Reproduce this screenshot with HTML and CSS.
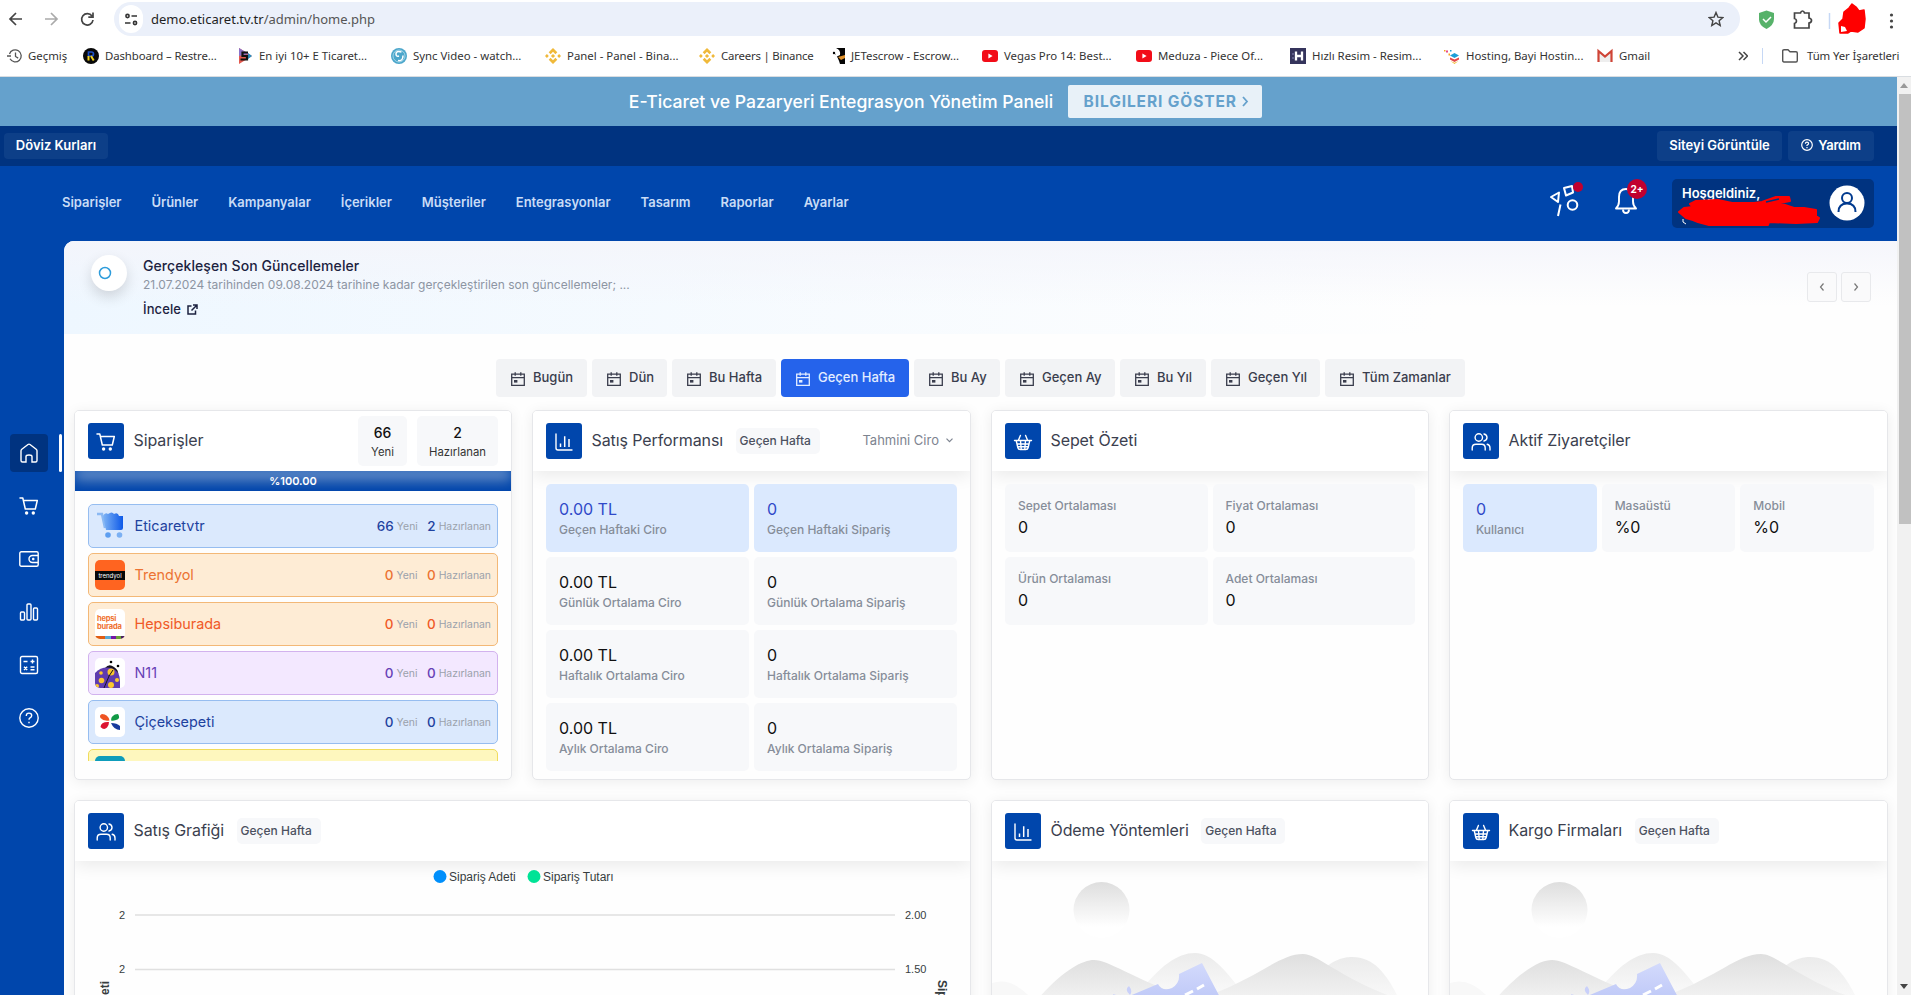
FILE: index.html
```html
<!DOCTYPE html>
<html lang="tr">
<head>
<meta charset="utf-8">
<title>Yönetim Paneli</title>
<link rel="stylesheet" href="styles.css">
</head>
<body>
<svg class="defs" aria-hidden="true">
  <symbol id="i-cal" viewBox="0 0 14 14"><path d="M.7 2.2h12.6v11.1H.7zM.7 5.6h12.6M4.2.2v3.6M9.8.2v3.6" fill="none" stroke="currentColor" stroke-width="1.3"/><path d="M3 8h3.4v2.6H3z" fill="currentColor"/></symbol>
  <symbol id="i-cart" viewBox="0 0 20 20"><path d="M1 2h2.8l2.5 11h10l2-8.500H4.500" fill="none" stroke="currentColor" stroke-width="1.500" stroke-linejoin="round" stroke-linecap="round"/><circle cx="7.600" cy="17" r="1.700" fill="currentColor"/><circle cx="14.300" cy="17" r="1.700" fill="currentColor"/></symbol>
  <symbol id="i-bars" viewBox="0 0 20 20"><path d="M2 2v14q0 2 2 2h14" fill="none" stroke="currentColor" stroke-width="1.400" stroke-linecap="round"/><path d="M6.500 15v-3.500M10.700 15V4.200M15 15V7" fill="none" stroke="currentColor" stroke-width="1.500"/></symbol>
  <symbol id="i-basket" viewBox="0 0 20 20"><path d="M1.500 8.500h17M3.200 8.500l1.600 7q.4 2 2.400 2h5.600q2 0 2.400-2l1.600-7M4 12h12M7.500 8.500l.7 8.500M12.500 8.500l-.7 8.500M5.500 8l1.900-4.500M14.500 8l-1.900-4.500M5 14.700h10" fill="none" stroke="currentColor" stroke-width="1.400" stroke-linecap="round"/></symbol>
  <symbol id="i-users" viewBox="0 0 20 20"><circle cx="7.800" cy="5.500" r="3.700" fill="none" stroke="currentColor" stroke-width="1.400"/><path d="M1.200 18v-2q0-3.700 3.800-3.700h5.600q3.600 0 3.600 3.700v2M13 2q3 .8 3 3.600T13 9M16.200 12.300q2.800.7 2.800 3.700v2" fill="none" stroke="currentColor" stroke-width="1.400" stroke-linecap="round"/></symbol>
  <symbol id="i-diamond" viewBox="0 0 16 16"><path d="M8 0l4.300 4.300-1.900 1.900L8 3.800 5.600 6.200 3.700 4.300zM8 16l4.300-4.300-1.900-1.900L8 12.200 5.600 9.800l-1.900 1.900zM8 5.900L10.100 8 8 10.100 5.900 8zM1.900 6.100L3.800 8 1.900 9.900 0 8zM14.100 6.100L16 8l-1.900 1.900L12.200 8z" fill="#f0b93a"/></symbol>
  <symbol id="i-yt" viewBox="0 0 16 12"><rect width="16" height="12" rx="3" fill="#f20d18"/><path d="M6.400 3.500v5L10.600 6z" fill="#fff"/></symbol>
  <symbol id="i-empty" viewBox="0 0 436 140">
    <circle cx="109.500" cy="49" r="28" fill="url(#g-sun)"/>
    <path d="M0 122q18-6 36 12v6H0z" fill="#f8f8f8"/>
    <path d="M145 134C168 105 185 92 203 92s32 20 50 42z" fill="url(#g-hill2)"/>
    <path d="M320 120C338 98 352 96 360 96c24 0 36 20 48 44h-88z" fill="url(#g-hill2)"/>
    <path d="M44 140C70 110 90 99 102 99c16 0 45 23 105 41z" fill="url(#g-hill)"/>
    <path d="M200 140C265 120 285 93 311 93c16 0 35 24 100 47z" fill="url(#g-hill)"/>
    <path d="M138 140l-3-4 31-13q4 8 14 4 8-5 7-14l23-11 20 38z" fill="url(#g-ticket)"/>
    <path d="M193 134l8-4M205 128l7-4" stroke="#fff" stroke-width="3"/>
    <path d="M137 125q-5 4 1 9 3-4-1-9M121 133l9 3 2 4h-8z" fill="#c9d0fa"/>
  </symbol>
  <linearGradient id="g-sun" x2="0" y2="1"><stop stop-color="#dedede"/><stop offset=".8" stop-color="#fff"/></linearGradient>
  <linearGradient id="g-hill" x2="0" y2="1"><stop stop-color="#dfdfdf"/><stop offset="1" stop-color="#f3f3f3"/></linearGradient>
  <linearGradient id="g-hill2" x2="0" y2="1"><stop stop-color="#ebebeb"/><stop offset="1" stop-color="#fafafa"/></linearGradient>
  <linearGradient id="g-ticket" x2="0" y2="1"><stop stop-color="#d3dafc"/><stop offset="1" stop-color="#bec8f7"/></linearGradient>
  <linearGradient id="g-cart"><stop stop-color="#7fb4f5"/><stop offset="1" stop-color="#0d59e8"/></linearGradient>
</svg>

<header class="chrome">
  <div class="toolbar">
    <svg class="tb-nav" viewBox="0 0 96 20"><g fill="none" stroke-width="1.700"><path d="M14 10H2M8 4l-6 6 6 6" stroke="#444"/><path d="M37 10h12M43 4l6 6-6 6" stroke="#aaa"/><path d="M84 7A5.700 5.700 0 1 0 85 11M85 3.500v4.700h-4.700" stroke="#444"/></g></svg>
    <div class="omnibox">
      <span class="site-info"><svg width="13" height="13" viewBox="0 0 13 13" fill="none" stroke="#333" stroke-width="1.600"><circle cx="2.500" cy="3" r="1.600"/><path d="M6.500 3H12M0 10h5.500"/><circle cx="10" cy="10" r="1.600"/></svg></span>
      <span class="url"><b>demo.eticaret.tv.tr</b>/admin/home.php</span>
      <svg class="star" viewBox="0 0 16 16"><path d="M8 1.500l1.900 4.600 4.900.4-3.700 3.200 1.100 4.800L8 11.900l-4.200 2.600 1.100-4.800L1.200 6.500l4.900-.4z" fill="none" stroke="#444" stroke-width="1.400"/></svg>
    </div>
    <svg class="tb-ext" viewBox="0 0 160 34"><path d="M8 11l7.500-2.500 7.500 2.500v6q0 6-7.500 10Q8 23.500 8 17.500z" fill="#57b26a"/><path d="M12 17l3 3 5-5" fill="none" stroke="#fff" stroke-width="1.500"/><path d="M44 11h5.500q.5-2 2-2t2 2H58v5q2.500.5 2.500 2.500T58 21v5H43.500v-4.500q2-.5 2-2.500t-2-2.500V11z" fill="none" stroke="#444" stroke-width="1.700"/><path d="M78.500 11v16" stroke="#c6d8f5" stroke-width="1.500"/><path d="M89 31l-1-10 4-4 1-7 5-4 3-4 4 3 3 4 5-1 1 9-1 9-6 4-7-1-3 2z" fill="#f00" stroke="#f00" stroke-width="1.500" stroke-linejoin="round"/><path d="M90 24l4 1 2 4-6 1z" fill="#fff"/><g fill="#444"><circle cx="140.500" cy="13" r="1.600"/><circle cx="140.500" cy="19" r="1.600"/><circle cx="140.500" cy="25" r="1.600"/></g></svg>
  </div>
  <nav class="bookmarks">
    <a class="bm bm-1"><svg viewBox="0 0 16 16" fill="none" stroke="#555" stroke-width="1.300"><path d="M2.500 6A6 6 0 1 1 3 10.800M0 8h4M8.500 4.500V8.500l2.700 1.600"/></svg>Geçmiş</a>
    <a class="bm bm-2"><svg viewBox="0 0 16 16"><circle cx="8" cy="8" r="8" fill="#080808"/><path d="M5.500 8V4h3q2 0 2 2t-2 2z" stroke="#1d4fc2" stroke-width="1.700" fill="none"/><path d="M5.500 8v4.500M8 8l2.700 4.500" stroke="#f2d21c" stroke-width="2"/></svg>Dashboard – Restre...</a>
    <a class="bm bm-3"><svg viewBox="0 0 16 16"><path d="M2 0l13 8L2 16z" fill="#e35a4f"/><path d="M2 0l10 6L2 8z" fill="#8a72c9"/><path d="M11 5l4 3-4 3z" fill="#2a8ec0"/><path d="M11 4.500H5.500V8H10v3.500H3.500" fill="none" stroke="#111" stroke-width="2.200"/></svg>En iyi 10+ E Ticaret...</a>
    <a class="bm bm-4"><svg viewBox="0 0 16 16"><circle cx="8" cy="8" r="8" fill="#4ba6cb"/><path d="M10.500 4Q5 2.500 5 6q0 3 3 2M7 12.500q5 1 5-5" fill="none" stroke="#fff" stroke-width="1.500"/><circle cx="8" cy="8" r="6" fill="none" stroke="#b8dfed" stroke-width=".8"/></svg>Sync Video - watch...</a>
    <a class="bm bm-5"><svg><use href="#i-diamond"/></svg>Panel - Panel - Bina...</a>
    <a class="bm bm-6"><svg><use href="#i-diamond"/></svg>Careers | Binance</a>
    <a class="bm bm-7"><svg viewBox="0 0 16 16"><path d="M3 0h13v16h-5Q9 9 6 6z" fill="#050505"/><path d="M0 0h7q5 2 4 7l-4 2Q7 3 0 2z" fill="#fff"/><circle cx="5" cy="5" r="1.200"/><path d="M9 9l7-2v3l-4 2z" fill="#e0912a"/></svg>JETescrow - Escrow...</a>
    <a class="bm bm-8"><svg><use href="#i-yt"/></svg>Vegas Pro 14: Best...</a>
    <a class="bm bm-9"><svg><use href="#i-yt"/></svg>Meduza - Piece Of...</a>
    <a class="bm bm-10"><svg viewBox="0 0 16 16"><path d="M0 0h16v16H0z" fill="#35345c"/><path d="M6 3.500v9M12 3.500v9M6 8h6" stroke="#fff" stroke-width="2.300"/><path d="M2 6h2M2 10h2" stroke="#8886b5"/></svg>Hızlı Resim - Resim...</a>
    <a class="bm bm-11"><svg viewBox="0 0 16 16"><path d="M6 7.500l4.500-2.500L15 7.500 10.500 10z" fill="#1b9fd8"/><path d="M6 9.500l4.500 2 4.500-2v2l-4.500 2.500L6 11.500z" fill="#e34848"/><path d="M6.500 13l4 1.800 4-1.800-4 3z" fill="#f0b92b"/><path d="M2 2.500h2v2H2z" fill="#e8488a"/><path d="M4.500 5.500h1.500v2H4.500z" fill="#f5a623"/><path d="M6 2h1.500v1.500H6z" fill="#1b9fd8"/><path d="M0 2h1.500v1.500H0z" fill="#f5a623"/></svg>Hosting, Bayi Hostin...</a>
    <a class="bm bm-12"><svg viewBox="0 0 16 12"><path d="M1.500 12V1L8 6.500 14.500 1v11" fill="#eee" stroke="#cf4436" stroke-width="2.200"/></svg>Gmail</a>
    <span class="more"><svg viewBox="0 0 10 10" width="10" height="10" fill="none" stroke="#444" stroke-width="1.500"><path d="M1 1l4 4-4 4M5.500 1l4 4-4 4"/></svg></span>
    <a class="bm all"><svg viewBox="0 0 16 14" fill="none" stroke="#555" stroke-width="1.400"><path d="M.7 2Q.7.800 2 .8h4l2 2h6q1.300 0 1.300 1.200v7.500q0 1.500-1.300 1.500H2Q.7 13 .7 11.500z"/></svg>Tüm Yer İşaretleri</a>
  </nav>
</header>

<div class="viewport">
  <div class="page">
    <div class="promo"><span>E-Ticaret ve Pazaryeri Entegrasyon Yönetim Paneli</span><a class="promo-btn">BILGILERI GÖSTER<svg width="7" height="11" viewBox="0 0 7 11" fill="none" stroke="currentColor" stroke-width="1.800"><path d="M1 1l4 4.500L1 10"/></svg></a></div>
    <div class="topbar">
      <a class="tbtn rates">Döviz Kurları</a>
      <a class="tbtn site">Siteyi Görüntüle</a>
      <a class="tbtn help"><svg width="12" height="12" viewBox="0 0 12 12" fill="none" stroke="#fff" stroke-width="1.200"><circle cx="6" cy="6" r="5.300"/><path d="M4.400 4.800q0-1.700 1.600-1.700t1.600 1.500Q7.600 5.500 6 6.300v.8M6 8v1.200"/></svg>Yardım</a>
    </div>
    <div class="mainnav">
      <nav class="menu"><a>Siparişler</a><a>Ürünler</a><a>Kampanyalar</a><a>İçerikler</a><a>Müşteriler</a><a>Entegrasyonlar</a><a>Tasarım</a><a>Raporlar</a><a>Ayarlar</a></nav>
      <svg class="shapes" viewBox="0 0 36 38" fill="none" stroke="#fff" stroke-width="2" stroke-linejoin="round"><path d="M2 17l8-4.500-1 9.500zM15 8l8-2 1 6.500-7 3zM11.500 24.500L9 36"/><circle cx="23.500" cy="25" r="4.800"/><circle cx="29" cy="7" r="5" fill="#c1002f" stroke="none"/></svg>
      <div class="bell"><svg viewBox="0 0 22 27" fill="none" stroke="#fff" stroke-width="1.900" stroke-linejoin="round"><path d="M1 21.500q3-3 3-7V10q0-8 7-8t7 8v4.500q0 4 3 7z"/><path d="M8 22.500q0 3.500 3 3.500t3-3.500"/></svg><b>2+</b></div>
      <div class="user">
        <span>Hoşgeldiniz,</span>
        <svg class="scribble" viewBox="0 0 142 34"><path d="M1 18L6 14 15 13 12 10 18 7 40 6 54 9 76 9 84 8 98 3 111 3 112 7 101 9 116 14 126 14 138 16 138 22 141 24 139 28 118 29 91 28 90 31 31 31 20 28 15 26 8 24z" fill="#f00" stroke="#f00" stroke-width="2" stroke-linejoin="round"/><path d="M88 8l13-3" stroke="#003380" stroke-width="1.500"/><path d="M5 25v3l3 2" fill="none" stroke="#fff"/></svg>
        <svg class="avatar" viewBox="0 0 36 36"><circle cx="18" cy="18" r="17.500" fill="#fff"/><g fill="none" stroke="#013a8f" stroke-width="2"><circle cx="18" cy="13" r="5"/><path d="M9.500 27q0-8.500 8.500-8.500t8.500 8.500"/></g></svg>
      </div>
    </div>
    <div class="body">
      <aside class="side">
        <a class="s-item active"><svg viewBox="0 0 20 20"><path d="M2 7.800q0-1 .8-1.600L9 1.500q1-.7 2 0l6.200 4.700q.8.600.8 1.600v9.700q0 1.500-1.500 1.500h-3.500v-5.500q0-1.500-3-1.500t-3 1.500V19H3.500Q2 19 2 17.500z"/></svg></a>
        <a class="s-item"><svg><use href="#i-cart"/></svg></a>
        <a class="s-item"><svg viewBox="0 0 20 20"><rect x=".8" y="2.800" width="18.400" height="14.400" rx="1.500"/><path d="M19 6.500h-5.500a3.500 3.500 0 0 0 0 7H19M13 10h2.500M14.200 8.800v2.400"/></svg></a>
        <a class="s-item"><svg viewBox="0 0 20 20"><rect x="1.500" y="10" width="4" height="8" rx="1"/><rect x="8" y="2" width="4" height="16" rx="1"/><rect x="14.500" y="6" width="4" height="12" rx="1"/></svg></a>
        <a class="s-item"><svg viewBox="0 0 20 20"><rect x="1.500" y="1.500" width="17" height="17" rx="1.500"/><path d="M4.500 6.500h4M11.500 6.500h4M13.500 4.500v4M11.500 12h4M11.500 14.800h4M5 11.700l3.200 3.200M8.200 11.700L5 14.900"/></svg></a>
        <a class="s-item"><svg viewBox="0 0 20 20"><circle cx="10" cy="10" r="9.200"/><path d="M7.300 8q0-2.900 2.700-2.900T12.700 7.600Q12.700 9 11 9.900q-1 .6-1 1.900M10 13.700v1.500"/></svg></a>
      </aside>
      <main class="content">
        <section class="news">
          <span class="news-ico"><svg viewBox="0 0 36 36"><circle cx="14" cy="18" r="5.500" fill="none" stroke="#2d9cdb" stroke-width="1.500"/></svg></span>
          <div class="news-text"><h2>Gerçekleşen Son Güncellemeler</h2><p>21.07.2024 tarihinden 09.08.2024 tarihine kadar gerçekleştirilen son güncellemeler; ...</p><a>İncele<svg width="11" height="11" viewBox="0 0 11 11" fill="none" stroke="#1c2240" stroke-width="1.500"><path d="M4.500 2H1v8h7.500V6.500M6 1h4v4M10 1L4.500 6.500"/></svg></a></div>
          <div class="pager"><a><svg viewBox="0 0 8 10"><path d="M5.500 1.500L2.500 5l3 3.500"/></svg></a><a><svg viewBox="0 0 8 10"><path d="M2.500 1.500l3 3.500-3 3.500"/></svg></a></div>
        </section>
        <div class="periods">
          <a class="p1"><svg><use href="#i-cal"/></svg><span>Bugün</span></a><a class="p2"><svg><use href="#i-cal"/></svg><span>Dün</span></a><a class="p3"><svg><use href="#i-cal"/></svg><span>Bu Hafta</span></a><a class="p4 on"><svg><use href="#i-cal"/></svg><span>Geçen Hafta</span></a><a class="p5"><svg><use href="#i-cal"/></svg><span>Bu Ay</span></a><a class="p6"><svg><use href="#i-cal"/></svg><span>Geçen Ay</span></a><a class="p7"><svg><use href="#i-cal"/></svg><span>Bu Yıl</span></a><a class="p8"><svg><use href="#i-cal"/></svg><span>Geçen Yıl</span></a><a class="p9"><svg><use href="#i-cal"/></svg><span>Tüm Zamanlar</span></a>
        </div>
        <div class="grid">
          <section class="card orders">
            <div class="head"><span class="ico"><svg><use href="#i-cart"/></svg></span><h3>Siparişler</h3><div class="count c1"><b>66</b>Yeni</div><div class="count c2"><b>2</b>Hazırlanan</div></div>
            <div class="progress">%100.00</div>
            <div class="shops">
              <div class="shop blue"><svg class="logo" viewBox="0 0 30 30"><path d="M2 3h5l3 14" fill="none" stroke="#8bb9f3" stroke-width="2.500"/><path d="M8 5q2-4 5-2 4-3 6 0 4-2 5 2h4v12q0 2-2 2H11z" fill="url(#g-cart)"/><circle cx="13" cy="24" r="2.800" fill="#5d9ef0"/><circle cx="24.500" cy="24" r="2.800" fill="#7bb0f3"/></svg><h4>Eticaretvtr</h4><b>66</b><i>Yeni</i><b>2</b><i>Hazırlanan</i></div>
              <div class="shop orange"><span class="logo trendyol"><em>trendyol</em></span><h4>Trendyol</h4><b>0</b><i>Yeni</i><b>0</b><i>Hazırlanan</i></div>
              <div class="shop orange deep"><span class="logo hepsi"><em>hepsi<br>burada</em></span><h4>Hepsiburada</h4><b>0</b><i>Yeni</i><b>0</b><i>Hazırlanan</i></div>
              <div class="shop purple"><svg class="logo white" viewBox="0 0 30 30"><path d="M10 10q4-5 9-1 5 3 4 8z" fill="#17131f"/><path d="M0 15Q7 8 16 10t9 14v6H0z" fill="#5f3bb0"/><path d="M17 11L9 30" stroke="#17131f"/><g fill="#fbc72e"><circle cx="16" cy="14" r="3.500"/><circle cx="6.500" cy="22.500" r="2.800"/><circle cx="16" cy="27" r="3"/><circle cx="22" cy="22" r="2"/><circle cx="6" cy="15" r="1.800"/><circle cx="2" cy="28" r="2"/></g><circle cx="16" cy="4" r="1.300"/><circle cx="23" cy="8" r="1.300"/><path d="M18 12l-4 6" stroke="#17131f"/></svg><h4>N11</h4><b>0</b><i>Yeni</i><b>0</b><i>Hazırlanan</i></div>
              <div class="shop blue"><svg class="logo white" viewBox="0 0 30 30"><path d="M14.500 13.500Q13 7 7 7q-3 1-1.500 4 3 3.500 9 2.500z" fill="#ef5423"/><path d="M16 13.500q0-6 7-6.500 2.500 3.500-.5 5.500-3 1.500-6.500 1z" fill="#129a45"/><path d="M14 15q-8-.5-8.500 5 3.500 3.500 6.500.5 2-2 2-5.500z" fill="#dc1431"/><path d="M16 16q6 0 9 3v4q-6 0-9-7z" fill="#183a9c"/></svg><h4>Çiçeksepeti</h4><b>0</b><i>Yeni</i><b>0</b><i>Hazırlanan</i></div>
              <div class="shop yellow"><span class="logo teal"></span></div>
            </div>
          </section>
          <section class="card">
            <div class="head"><span class="ico"><svg><use href="#i-bars"/></svg></span><h3>Satış Performansı</h3><span class="tag">Geçen Hafta</span><span class="select">Tahmini Ciro<svg width="7" height="5" viewBox="0 0 7 5" fill="none" stroke="#7d8490" stroke-width="1.200"><path d="M.5.700l3 3 3-3"/></svg></span></div>
            <div class="tiles two">
              <div class="tile hi"><b>0.00 TL</b><span>Geçen Haftaki Ciro</span></div><div class="tile hi"><b>0</b><span>Geçen Haftaki Sipariş</span></div>
              <div class="tile"><b>0.00 TL</b><span>Günlük Ortalama Ciro</span></div><div class="tile"><b>0</b><span>Günlük Ortalama Sipariş</span></div>
              <div class="tile"><b>0.00 TL</b><span>Haftalık Ortalama Ciro</span></div><div class="tile"><b>0</b><span>Haftalık Ortalama Sipariş</span></div>
              <div class="tile"><b>0.00 TL</b><span>Aylık Ortalama Ciro</span></div><div class="tile"><b>0</b><span>Aylık Ortalama Sipariş</span></div>
            </div>
          </section>
          <section class="card">
            <div class="head"><span class="ico"><svg><use href="#i-basket"/></svg></span><h3>Sepet Özeti</h3></div>
            <div class="tiles two">
              <div class="tile rev"><span>Sepet Ortalaması</span><b>0</b></div><div class="tile rev"><span>Fiyat Ortalaması</span><b>0</b></div>
              <div class="tile rev"><span>Ürün Ortalaması</span><b>0</b></div><div class="tile rev"><span>Adet Ortalaması</span><b>0</b></div>
            </div>
          </section>
          <section class="card">
            <div class="head"><span class="ico"><svg><use href="#i-users"/></svg></span><h3>Aktif Ziyaretçiler</h3></div>
            <div class="tiles three">
              <div class="tile hi"><b>0</b><span>Kullanıcı</span></div><div class="tile rev"><span>Masaüstü</span><b>%0</b></div><div class="tile rev"><span>Mobil</span><b>%0</b></div>
            </div>
          </section>
          <section class="card wide">
            <div class="head"><span class="ico"><svg><use href="#i-users"/></svg></span><h3>Satış Grafiği</h3><span class="tag">Geçen Hafta</span></div>
            <svg class="chart" viewBox="0 0 893 320">
              <circle cx="365" cy="15.500" r="6.500" fill="#008ffb"/><text class="lg" x="374" y="20">Sipariş Adeti</text>
              <circle cx="459" cy="15.500" r="6.500" fill="#00e396"/><text class="lg" x="468" y="20">Sipariş Tutarı</text>
              <path d="M60 54H820M60 108.500H820" stroke="#e0e0e0" stroke-width="1.300"/>
              <text class="ax" x="44" y="58">2</text><text class="ax" x="44" y="112">2</text>
              <text class="ax" x="830" y="58">2.00</text><text class="ax" x="830" y="112">1.50</text>
              <text class="vt" transform="translate(34 120) rotate(-90)" text-anchor="end">Sipariş Adeti</text>
              <text class="vt" transform="translate(863 119) rotate(90)">Sipariş Tutarı</text>
            </svg>
          </section>
          <section class="card">
            <div class="head"><span class="ico"><svg><use href="#i-bars"/></svg></span><h3>Ödeme Yöntemleri</h3><span class="tag">Geçen Hafta</span></div>
            <svg class="empty"><use href="#i-empty"/></svg>
          </section>
          <section class="card">
            <div class="head"><span class="ico"><svg><use href="#i-basket"/></svg></span><h3>Kargo Firmaları</h3><span class="tag">Geçen Hafta</span></div>
            <svg class="empty"><use href="#i-empty"/></svg>
          </section>
        </div>
      </main>
    </div>
  </div>
  <div class="scroll"><svg viewBox="0 0 14 17"><path d="M3 11l4-5 4 5z" fill="#999"/></svg><span class="thumb"></span><svg class="down" viewBox="0 0 14 17"><path d="M3 6l4 5 4-5z" fill="#444"/></svg></div>
</div>
</body>
</html>
```
FILE: styles.css
```css
* { box-sizing: border-box; }
body { margin: 0; width: 1911px; height: 995px; overflow: hidden; background: #fff; font-family: Inter, "Liberation Sans", sans-serif; display: flex; flex-direction: column; }
h2, h3, h4, p { margin: 0; font-weight: 400; }
svg { display: block; flex: none; }
.defs { position: absolute; width: 0; height: 0; }

.chrome { height: 77px; flex: none; border-bottom: 1px solid #d9dde1; font-family: "Noto Sans", "Open Sans", sans-serif; color: #333; }
.toolbar { height: 38px; display: flex; align-items: center; padding-left: 8px; }
.tb-nav { width: 96px; height: 20px; }
.omnibox { margin-left: 10px; width: 1626px; height: 34px; border-radius: 17px; background: #ebf0fa; display: flex; align-items: center; padding: 0 16px 0 5px; }
.site-info { width: 24px; height: 28px; border-radius: 14px; background: #fff; display: flex; align-items: center; justify-content: center; }
.url { margin-left: 8px; font-size: 13px; flex: 1; color: #555; }
.url b { font-weight: 400; color: #1f1f1f; }
.star { width: 16px; height: 16px; }
.tb-ext { width: 160px; height: 34px; margin-left: 11px; }
.bookmarks { height: 35px; display: flex; align-items: center; padding-left: 7px; font-size: 11.400px; }
.bm { display: flex; align-items: center; gap: 6px; flex: none; white-space: nowrap; color: #333; }
.bm svg { width: 16px; height: 16px; }
.bm-1 { width: 76px; gap: 5px; }
.bm-2, .bm-3, .bm-4, .bm-5 { width: 154px; }
.bm-2 { letter-spacing: -.1px; }
.bm-6 { width: 130px; letter-spacing: -.2px; }
.bm-7 { width: 153px; }
.bm-8, .bm-9 { width: 154px; }
.bm-10 { width: 154px; }
.bm-11 { width: 153px; }
.bm-12 { width: 141px; }
.more { width: 25px; height: 16px; display: flex; align-items: center; border-right: 1px solid #c6d8f5; margin-right: 17px; flex: none; }
.all { gap: 9px; margin-left: 2px; letter-spacing: -.1px; }

.viewport { flex: 1; min-height: 0; display: flex; }
.page { width: 1897px; display: flex; flex-direction: column; overflow: hidden; background: #0046ac; }
.promo { height: 49px; flex: none; background: #65a1cc; display: flex; align-items: center; justify-content: center; gap: 15px; padding-right: 6px; color: #fff; font-size: 17.600px; font-weight: 500; white-space: nowrap; }
.promo-btn { width: 194px; height: 33px; border-radius: 2px; background: #e8f1f8; color: #65a1cc; font-size: 15.500px; font-weight: 700; letter-spacing: .9px; display: flex; align-items: center; justify-content: center; gap: 5px; padding-left: 2px; }
.topbar { height: 40px; flex: none; background: #003380; display: flex; align-items: center; padding: 0 23px 0 4px; color: #fff; font-size: 13px; font-weight: 600; }
.tbtn { height: 30px; border-radius: 4px; background: #0d3f88; display: flex; align-items: center; justify-content: center; gap: 5px; white-space: nowrap; padding-bottom: 2px; }
.rates { width: 104px; height: 26px; margin-right: auto; }
.site { width: 125px; margin-right: 6px; }
.help { width: 86px; letter-spacing: -.2px; }
.mainnav { height: 75px; flex: none; display: flex; align-items: center; padding: 0 23px 2px 62px; }
.menu { display: flex; gap: 30px; flex: 1; color: #c9dcf6; font-size: 13px; font-weight: 600; letter-spacing: -.02px; margin-top: -2px; }
.shapes { width: 36px; height: 38px; margin: -8px 30px 0 0; }
.bell { position: relative; width: 22px; height: 27px; margin: -4px 35px 0 0; }
.bell svg { width: 22px; height: 27px; }
.bell b { position: absolute; left: 12px; top: -8px; width: 20px; height: 20px; border-radius: 50%; background: #c1002f; color: #fff; font-size: 10px; display: flex; align-items: center; justify-content: center; }
.user { position: relative; width: 202px; height: 49px; border-radius: 5px; background: #003380; display: flex; align-items: center; justify-content: space-between; padding: 0 9px 0 10px; color: #fff; font-size: 13px; font-weight: 600; margin-bottom: -1px; }
.user span { margin-bottom: 20px; }
.avatar { width: 36px; height: 36px; }
.scribble { position: absolute; left: 6px; top: 15px; width: 142px; height: 34px; }

.body { flex: 1; min-height: 0; display: flex; }
.side { width: 64px; flex: none; display: flex; flex-direction: column; align-items: flex-start; gap: 15px; padding: 193px 0 0 10px; }
.s-item { width: 38px; height: 38px; border-radius: 4px; display: flex; align-items: center; justify-content: center; color: #fff; position: relative; }
.s-item svg { width: 20px; height: 20px; fill: none; stroke: #fff; stroke-width: 1.400; margin-left: .5px; }
.s-item use { stroke: none; }
.active { background: #003380; }
.active::after { content: ""; position: absolute; left: 49px; top: 0; width: 3px; height: 38px; border-radius: 2px; background: #fff; }
.content { flex: 1; min-width: 0; background: #fefefe; border-top-left-radius: 10px; overflow: hidden; }
.news { height: 93px; display: flex; align-items: flex-start; padding: 14px 26px 0 27px; background: linear-gradient(180deg, rgba(244,245,251,.9), rgba(255,255,255,0) 70%), linear-gradient(90deg, #eef7ff, #fefefe 75%); }
.news-ico { width: 36px; height: 36px; border-radius: 50%; background: #fff; box-shadow: 0 6px 14px rgba(0,0,0,.14); }
.news-text { margin-left: 16px; flex: 1; }
.news-text h2 { font-size: 14px; line-height: 22px; font-weight: 500; letter-spacing: .08px; color: #1c2240; }
.news-text p { font-size: 12px; line-height: 15px; color: #8d95a3; }
.news-text a { display: flex; align-items: center; gap: 6px; font-size: 13px; line-height: 18px; font-weight: 500; letter-spacing: .1px; color: #1c2240; margin-top: 8px; }
.pager { display: flex; gap: 4px; margin-top: 17px; }
.pager a { width: 30px; height: 30px; border: 1px solid #e8e9ec; border-radius: 3px; display: flex; align-items: center; justify-content: center; background: #fafafb; }
.pager svg { width: 8px; height: 10px; fill: none; stroke: #777; stroke-width: 1.200; }
.periods { display: flex; gap: 5px; padding: 25px 0 0 432px; }
.periods a { height: 38px; border-radius: 4px; background: #f2f3f5; color: #3a3d4d; font-size: 13px; font-weight: 500; display: flex; align-items: center; gap: 8px; padding-left: 15px; white-space: nowrap; }
.periods span { margin-bottom: 2px; }
.periods svg { width: 14px; height: 14px; margin-top: 1px; }
.p1 { width: 91px; } .p2 { width: 75px; } .p3 { width: 104px; } .p4 { width: 128px; } .p5 { width: 86px; } .p6 { width: 110px; } .p7 { width: 86px; } .p8 { width: 109px; } .p9 { width: 140px; }
.periods .on { background: #2563eb; color: #e3edff; }

.grid { display: grid; grid-template-columns: 438px 439px 438px 439px; grid-auto-rows: 370px; column-gap: 20px; row-gap: 20px; padding: 13px 0 0 10px; }
.card { background: #fefefe; border: 1px solid #e6e7ea; border-radius: 5px; box-shadow: 0 2px 14px rgba(0,0,0,.07); overflow: hidden; }
.wide { grid-column: span 2; }
.head { height: 60px; display: flex; align-items: center; padding: 0 13px; background: #fff; box-shadow: 0 5px 16px rgba(0,0,0,.08); }
.ico { width: 36px; height: 36px; border-radius: 3px; background: #0046ac; color: #fff; display: flex; align-items: center; justify-content: center; margin-right: 9.500px; }
.ico svg { width: 20px; height: 20px; margin-top: 2px; }
.head h3 { font-size: 16px; line-height: 24px; letter-spacing: -.09px; margin-bottom: 2px; color: #3b3f4f; white-space: nowrap; }
.count { height: 50px; border-radius: 5px; background: #f7f8fa; font-size: 11.300px; line-height: 18px; color: #333; display: flex; flex-direction: column; align-items: center; padding-top: 7px; }
.count b { font-size: 14px; line-height: 20px; font-weight: 500; color: #111; }
.c1 { width: 49px; margin-left: auto; }
.c2 { width: 81px; margin-left: 10px; }
.orders .head { box-shadow: none; }
.progress { height: 20px; background: linear-gradient(180deg, #6b94cc, #2a62b4 60%, #0a4aad); box-shadow: inset 0 -2px 12px #0046ac; color: #fff; font-size: 11px; font-weight: 600; text-align: center; line-height: 20px; }
.shops { padding: 0 13px; margin-top: 13px; height: 257px; overflow: hidden; display: flex; flex-direction: column; gap: 5px; }
.shop { height: 44px; flex: none; border: 1px solid; border-radius: 5px; display: flex; align-items: center; padding: 0 6px; }
.shop h4 { font-size: 14.400px; margin: 0 auto 1px 9.500px; }
.shop b { font-size: 13.500px; font-weight: 500; margin: 0 0 1px 9.500px; }
.shop i { font-style: normal; font-size: 10.400px; color: #9aa1ab; margin-left: 3px; }
.blue { background: #dbe9fd; border-color: #96bdf0; color: #1e429f; }
.orange { background: #feecd5; border-color: #f3b877; color: #ec7333; }
.deep { color: #f05a28; }
.purple { background: #f3e8ff; border-color: #d2b2ee; color: #6741b6; }
.yellow { background: #fef7be; border-color: #f0dc5c; }
.logo { width: 30px; height: 30px; border-radius: 5px; overflow: hidden; flex: none; }
.white { background: #fff; }
.teal { background: #0e9cba; }
.trendyol { background: #ff6420; display: flex; align-items: center; }
.trendyol em { width: 30px; background: #080808; color: #fff; font: 400 6px/9px Inter, sans-serif; text-align: center; }
.hepsi { background: linear-gradient(90deg, #e05c12 35%, #58a9d7 35% 52%, #7318a5 52% 70%, #6aa335 70% 86%, #49205f 86%) bottom / 100% 3px no-repeat #fff; }
.hepsi em { display: block; font: 700 7.500px/7.500px Inter, sans-serif; color: #ef702d; padding: 6px 0 0 2px; letter-spacing: -.2px; }

.tag { margin-left: 12.500px; height: 26px; border-radius: 5px; background: #f7f8fa; font-size: 12px; font-weight: 500; line-height: 25px; padding: 0 9px 0 4px; color: #4c5160; white-space: nowrap; }
.select { margin: 0 0 2px auto; display: flex; align-items: center; gap: 7px; padding-right: 4px; font-size: 13px; color: #7d8490; white-space: nowrap; }
.tiles { display: grid; gap: 5px; padding: 13px 13px 0; grid-auto-rows: 68px; }
.two { grid-template-columns: 1fr 1fr; }
.three { grid-template-columns: 1fr 1fr 1fr; }
.tile { border-radius: 5px; background: #f7f8fa; padding: 14px 13px 0; display: flex; flex-direction: column; }
.tile b { font-size: 16px; line-height: 23px; font-weight: 400; color: #111; }
.tile span { font-size: 12px; line-height: 18px; color: #868d99; font-weight: 500; }
.hi { background: #dbe9fe; }
.hi b { color: #3049c9; }
.rev { padding-top: 13px; }
.rev b { line-height: 24px; }
.chart { width: 893px; height: 320px; }
.lg, .ax, .vt { font-family: "Liberation Sans", sans-serif; fill: #373d3f; }
.lg { font-size: 12px; }
.ax { font-size: 11px; }
.vt { font-size: 12px; font-weight: 700; }
.empty { width: 436px; height: 140px; }

.scroll { width: 14px; background: #f1f1f1; display: flex; flex-direction: column; }
.scroll svg { width: 14px; height: 17px; }
.thumb { height: 430px; margin-left: 2px; background: #c1c1c1; }
.down { margin-top: auto; }
```
